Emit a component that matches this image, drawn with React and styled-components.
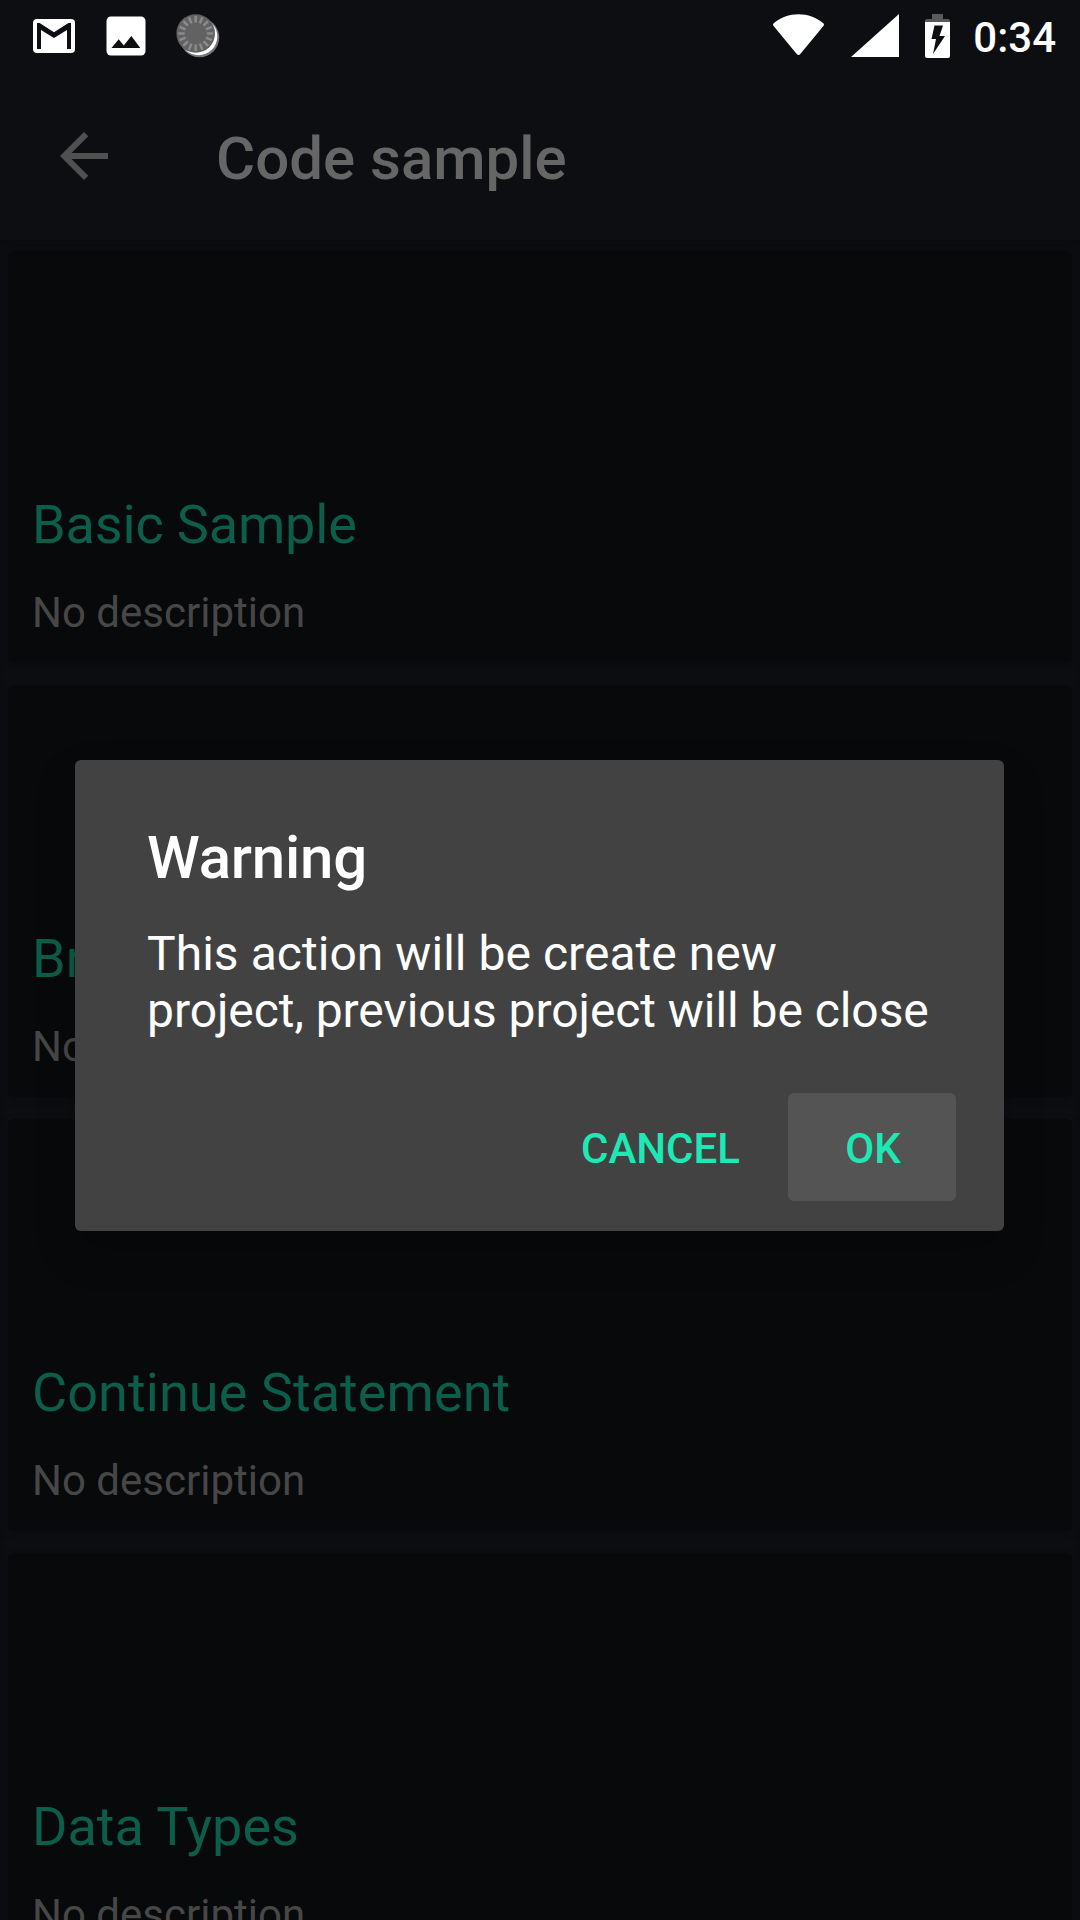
import React from "react";
import styled, { createGlobalStyle } from "styled-components";

const GlobalStyle = createGlobalStyle`
  * { box-sizing: border-box; }
  body {
    margin: 0;
    background: #0d0e12;
    font-family: Roboto, "Noto Sans", sans-serif;
  }
`;

const Screen = styled.div`
  position: relative;
  display: flex;
  flex-direction: column;
  width: 1080px;
  height: 1920px;
  overflow: hidden;
  background: #0d0e12;
`;

const StatusBar = styled.header`
  display: flex;
  align-items: flex-start;
  justify-content: space-between;
  flex: none;
  height: 72px;
  padding: 0 24px 0 33px;
`;

const StatusGroup = styled.div`
  display: flex;
  align-items: flex-start;
`;

const StatusIcon = styled.svg`
  display: block;
  flex: none;
  width: ${(p) => p.$w}px;
  height: 72px;
  margin-right: ${(p) => p.$gap}px;
`;

const Clock = styled.span`
  color: #fff;
  font-size: 42px;
  font-weight: 500;
  line-height: 50px;
  padding-top: 13px;
`;

const Toolbar = styled.nav`
  display: flex;
  align-items: center;
  flex: none;
  height: 168px;
  padding: 0 48px;
  gap: 96px;
`;

const BackIcon = styled.svg`
  display: block;
  width: 72px;
  height: 72px;
  fill: #505050;
`;

const ScreenTitle = styled.h1`
  margin: 0;
  padding-top: 6px;
  color: #666;
  font-size: 60px;
  font-weight: 500;
  line-height: 70px;
`;

const List = styled.main`
  display: flex;
  flex-direction: column;
  flex: 1;
  min-height: 0;
  gap: 22px;
  padding: 11px 8px 0;
  background: #0d0e11;
  box-shadow: inset 0 8px 8px -4px rgba(8, 9, 10, 0.6);
  overflow: hidden;
`;

const Card = styled.article`
  display: flex;
  flex-direction: column;
  justify-content: flex-end;
  flex: none;
  height: 412px;
  padding: 0 24px 25px;
  gap: 31px;
  border-radius: 6px;
  background: #08090b;
  box-shadow: 0 3px 8px rgba(8, 9, 10, 0.45);
`;

const CardTitle = styled.h2`
  margin: 0;
  color: #0c5d49;
  font-size: 54px;
  font-weight: 400;
  line-height: 64px;
  letter-spacing: ${(p) => p.$tracking}px;
`;

const CardText = styled.p`
  margin: 0;
  color: #474747;
  font-size: 42px;
  line-height: 50px;
`;

const Overlay = styled.div`
  position: absolute;
  inset: 0;
  display: flex;
  align-items: flex-start;
  padding: 760px 76px 0 75px;
`;

const Dialog = styled.section`
  display: flex;
  flex-direction: column;
  flex: 1;
  height: 471px;
  border-radius: 6px;
  background: #424242;
  box-shadow: 0 20px 40px rgba(0, 0, 0, 0.22);
`;

const DialogTitle = styled.h2`
  margin: 0;
  padding: 63px 72px 0;
  color: #fff;
  font-size: 60px;
  font-weight: 500;
  line-height: 70px;
  letter-spacing: -0.2px;
`;

const DialogText = styled.p`
  display: flex;
  flex-direction: column;
  margin: 0;
  padding: 32px 0 0 72px;
  color: #fff;
  font-size: 48px;
  line-height: 57px;
  white-space: nowrap;
`;

const DialogLine = styled.span`
  letter-spacing: ${(p) => p.$tracking}px;
`;

const DialogActions = styled.div`
  display: flex;
  justify-content: flex-end;
  margin-top: auto;
  padding: 0 48px 30px;
`;

const DialogButton = styled.button`
  width: ${(p) => p.$w}px;
  height: 108px;
  padding: 4px 0 0 ${(p) => (p.$active ? 2 : 0)}px;
  border: 0;
  border-radius: 6px;
  background: ${(p) => (p.$active ? "#545454" : "transparent")};
  color: #1de9b6;
  font-family: inherit;
  font-size: 42px;
  font-weight: 500;
  line-height: 50px;
`;

const samples = [
  { name: "Basic Sample", tracking: -0.15 },
  { name: "Break Statement", tracking: 0 },
  { name: "Continue Statement", tracking: 0.07 },
  { name: "Data Types", tracking: 0 },
];

const ticks = Array.from({ length: 16 }, (_, i) => i * 22.5);

export default function App() {
  return (
    <>
      <GlobalStyle />
      <Screen>
        <StatusBar>
          <StatusGroup>
            <StatusIcon $w={42} $gap={31} viewBox="0 0 42 72">
              <rect x="0" y="19" width="42" height="34" rx="4" fill="#fff" />
              <path d="M4 49V23h2.600L21 32.300 35.400 23H38v26h-4V30L21 38 8 30v19z" fill="#0d0e12" />
            </StatusIcon>
            <StatusIcon $w={40} $gap={30} viewBox="0 0 40 72">
              <rect x="0.500" y="16.500" width="39" height="39" rx="4.500" fill="#fff" />
              <path d="M5.500 48l7.200-8.700 5.100 6.200L25.300 36l9 12z" fill="#0d0e12" />
            </StatusIcon>
            <StatusIcon $w={44} $gap={0} viewBox="0 0 44 72">
              <circle cx="23.500" cy="37.500" r="19.700" fill="#777" />
              <circle cx="22.500" cy="36.500" r="18.800" fill="#fff" />
              <circle cx="19.700" cy="33.500" r="19.300" fill="#626262" />
              {ticks.map((a) => (
                <path
                  key={a}
                  d="M19.700 16v6.500"
                  stroke="#8c8c8c"
                  strokeWidth="2.400"
                  transform={`rotate(${a} 19.700 33.500)`}
                />
              ))}
            </StatusIcon>
          </StatusGroup>
          <StatusGroup>
            <StatusIcon $w={52} $gap={26} viewBox="0 0 52 72">
              <path
                d="M1 23C8 17.500 16 14.200 25.500 14.200S43 17.500 50 23q1.800 1.200.4 3L27.500 53.800q-2 2.400-4 0L.6 26Q-.8 24.200 1 23z"
                fill="#fff"
              />
            </StatusIcon>
            <StatusIcon $w={48} $gap={26} viewBox="0 0 48 72">
              <path d="M48 14v43H0z" fill="#fff" />
            </StatusIcon>
            <StatusIcon $w={25} $gap={23} viewBox="0 0 25 72">
              <path d="M7 14h11v5h5q2 0 2 2v1H0v-1q0-2 2-2h5z" fill="#5a5a5c" />
              <path d="M0 22h25v34q0 2-2 2H2q-2 0-2-2z" fill="#fff" />
              <path d="M9.500 25.500h8.500L14.500 36H20L8 54l3-15H6.500z" fill="#0d0e12" />
            </StatusIcon>
            <Clock>0:34</Clock>
          </StatusGroup>
        </StatusBar>

        <Toolbar>
          <BackIcon viewBox="0 0 24 24">
            <path d="M20 11H7.830l5.590-5.590L12 4l-8 8 8 8 1.410-1.410L7.830 13H20v-2z" />
          </BackIcon>
          <ScreenTitle>Code sample</ScreenTitle>
        </Toolbar>

        <List>
          {samples.map(({ name, tracking }) => (
            <Card key={name}>
              <CardTitle $tracking={tracking}>{name}</CardTitle>
              <CardText>No description</CardText>
            </Card>
          ))}
        </List>

        <Overlay>
          <Dialog role="alertdialog">
            <DialogTitle>Warning</DialogTitle>
            <DialogText>
              <DialogLine $tracking={0.04}>This action will be create new</DialogLine>
              <DialogLine $tracking={-0.06}>project, previous project will be close</DialogLine>
            </DialogText>
            <DialogActions>
              <DialogButton $w={255}>CANCEL</DialogButton>
              <DialogButton $w={168} $active>
                OK
              </DialogButton>
            </DialogActions>
          </Dialog>
        </Overlay>
      </Screen>
    </>
  );
}
